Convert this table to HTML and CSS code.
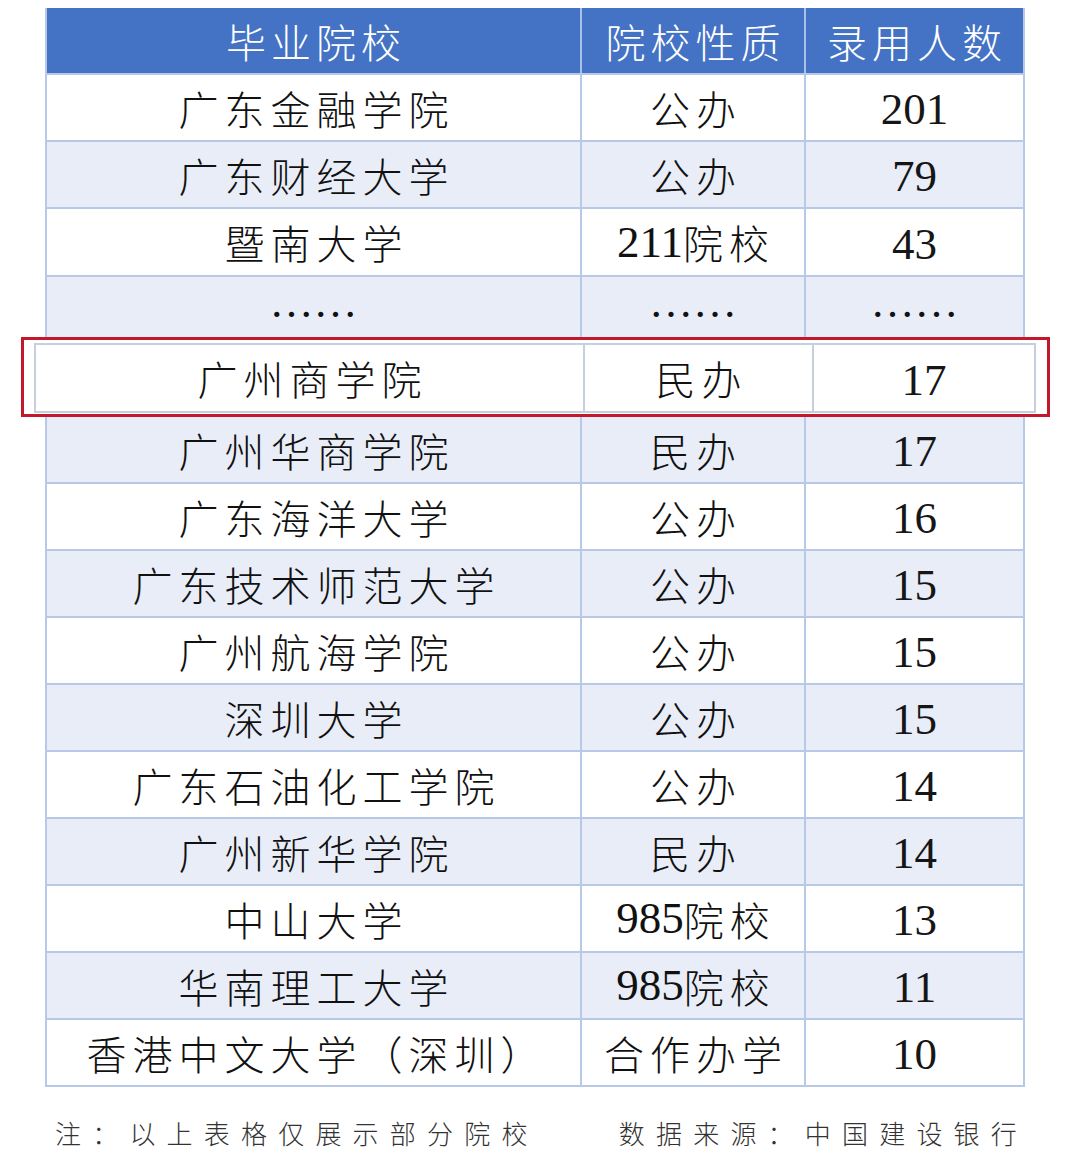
FILE: index.html
```html
<!DOCTYPE html>
<html lang="zh-CN">
<head>
<meta charset="utf-8">
<title>录用院校</title>
<link rel="stylesheet" href="styles.css">
</head>
<body>
<div class="page">
  <div class="table">
    <div class="row head">
      <div class="cell">毕业院校</div>
      <div class="cell">院校性质</div>
      <div class="cell">录用人数</div>
    </div>
    <div class="row r67">
      <div class="cell">广东金融学院</div>
      <div class="cell">公办</div>
      <div class="cell num">201</div>
    </div>
    <div class="row alt r67">
      <div class="cell">广东财经大学</div>
      <div class="cell">公办</div>
      <div class="cell num">79</div>
    </div>
    <div class="row r68">
      <div class="cell">暨南大学</div>
      <div class="cell"><span class="digits">211</span>院校</div>
      <div class="cell num">43</div>
    </div>
    <div class="row alt dots">
      <div class="cell"><span class="ell">……</span></div>
      <div class="cell"><span class="ell">……</span></div>
      <div class="cell"><span class="ell">……</span></div>
    </div>
    <div class="hl">
      <div class="hl-row">
        <div class="cell">广州商学院</div>
        <div class="cell">民办</div>
        <div class="cell num">17</div>
      </div>
    </div>
    <div class="row alt r67">
      <div class="cell">广州华商学院</div>
      <div class="cell">民办</div>
      <div class="cell num">17</div>
    </div>
    <div class="row r67">
      <div class="cell">广东海洋大学</div>
      <div class="cell">公办</div>
      <div class="cell num">16</div>
    </div>
    <div class="row alt r67">
      <div class="cell">广东技术师范大学</div>
      <div class="cell">公办</div>
      <div class="cell num">15</div>
    </div>
    <div class="row r67">
      <div class="cell">广州航海学院</div>
      <div class="cell">公办</div>
      <div class="cell num">15</div>
    </div>
    <div class="row alt r67">
      <div class="cell">深圳大学</div>
      <div class="cell">公办</div>
      <div class="cell num">15</div>
    </div>
    <div class="row r67">
      <div class="cell">广东石油化工学院</div>
      <div class="cell">公办</div>
      <div class="cell num">14</div>
    </div>
    <div class="row alt r67">
      <div class="cell">广州新华学院</div>
      <div class="cell">民办</div>
      <div class="cell num">14</div>
    </div>
    <div class="row r67">
      <div class="cell">中山大学</div>
      <div class="cell"><span class="digits">985</span>院校</div>
      <div class="cell num">13</div>
    </div>
    <div class="row alt r67">
      <div class="cell">华南理工大学</div>
      <div class="cell"><span class="digits">985</span>院校</div>
      <div class="cell num">11</div>
    </div>
    <div class="row r67">
      <div class="cell">香港中文大学（深圳）</div>
      <div class="cell">合作办学</div>
      <div class="cell num">10</div>
    </div>
  </div>
  <div class="footer">
    <span class="note">注：以上表格仅展示部分院校</span>
    <span class="src">数据来源：中国建设银行</span>
  </div>
</div>
</body>
</html>
```

FILE: styles.css
```css
html, body {
  margin: 0;
  padding: 0;
  background: #ffffff;
}

.page {
  width: 1080px;
  padding-top: 8px;
  font-family: "Noto Sans CJK SC", "Noto Sans", sans-serif;
  color: #111111;
}

.table {
  width: 980px;
  margin-left: 45px;
  box-sizing: border-box;
  border-left: 2px solid #b8c9e8;
  border-right: 2px solid #b8c9e8;
}

.row {
  display: grid;
  grid-template-columns: 535px 224px 1fr;
  box-sizing: border-box;
  border-bottom: 2px solid #b8c9e8;
  background: #ffffff;
}

.row.alt {
  background: #e8edf8;
}

.r67 { height: 67px; }
.r68 { height: 68px; }

.row.head {
  height: 67px;
  background: #4472c4;
  color: #ffffff;
  border-bottom-color: #b8c9e8;
}

.row.head .cell {
  border-right-color: #a9c0e9;
  letter-spacing: 5px;
  padding-left: 5px;
}

.row.dots {
  height: 60px;
  border-bottom: none;
}

.cell {
  display: flex;
  align-items: center;
  justify-content: center;
  font-size: 40px;
  font-weight: 300;
  line-height: 1;
  letter-spacing: 6px;
  padding-left: 6px;
  border-right: 2px solid #b8c9e8;
  white-space: nowrap;
}

.cell:last-child {
  border-right: none;
}

.cell.num {
  font-family: "Liberation Serif", "Noto Sans CJK SC", serif;
  font-size: 45px;
  font-weight: 400;
  letter-spacing: 0;
  padding-left: 0;
  padding-top: 4px;
  color: #161616;
}

.digits {
  font-family: "Liberation Serif", serif;
  font-size: 45px;
  font-weight: 400;
  letter-spacing: 0;
}

.ell {
  font-family: "Liberation Serif", serif;
  font-size: 44px;
  letter-spacing: 0;
  padding-bottom: 8px;
}

.row.dots .cell {
  padding-left: 0;
  letter-spacing: 0;
}

.hl {
  height: 80px;
  margin: 0 -27px 0 -26px;
  box-sizing: border-box;
  border: 3px solid #c3182c;
  padding: 3px 11px 1px 10px;
  background: #ffffff;
}

.hl-row {
  display: grid;
  grid-template-columns: 549px 229px 1fr;
  height: 70px;
  box-sizing: border-box;
  border: 2px solid #c6cfde;
  background: #ffffff;
}

.hl-row .cell {
  border-right-color: #c6cfde;
}

.footer {
  display: flex;
  justify-content: space-between;
  padding: 0 52px 0 55px;
  margin-top: 28px;
  font-size: 26px;
  line-height: 36px;
  font-weight: 300;
  letter-spacing: 11.2px;
  color: #333333;
}
```
